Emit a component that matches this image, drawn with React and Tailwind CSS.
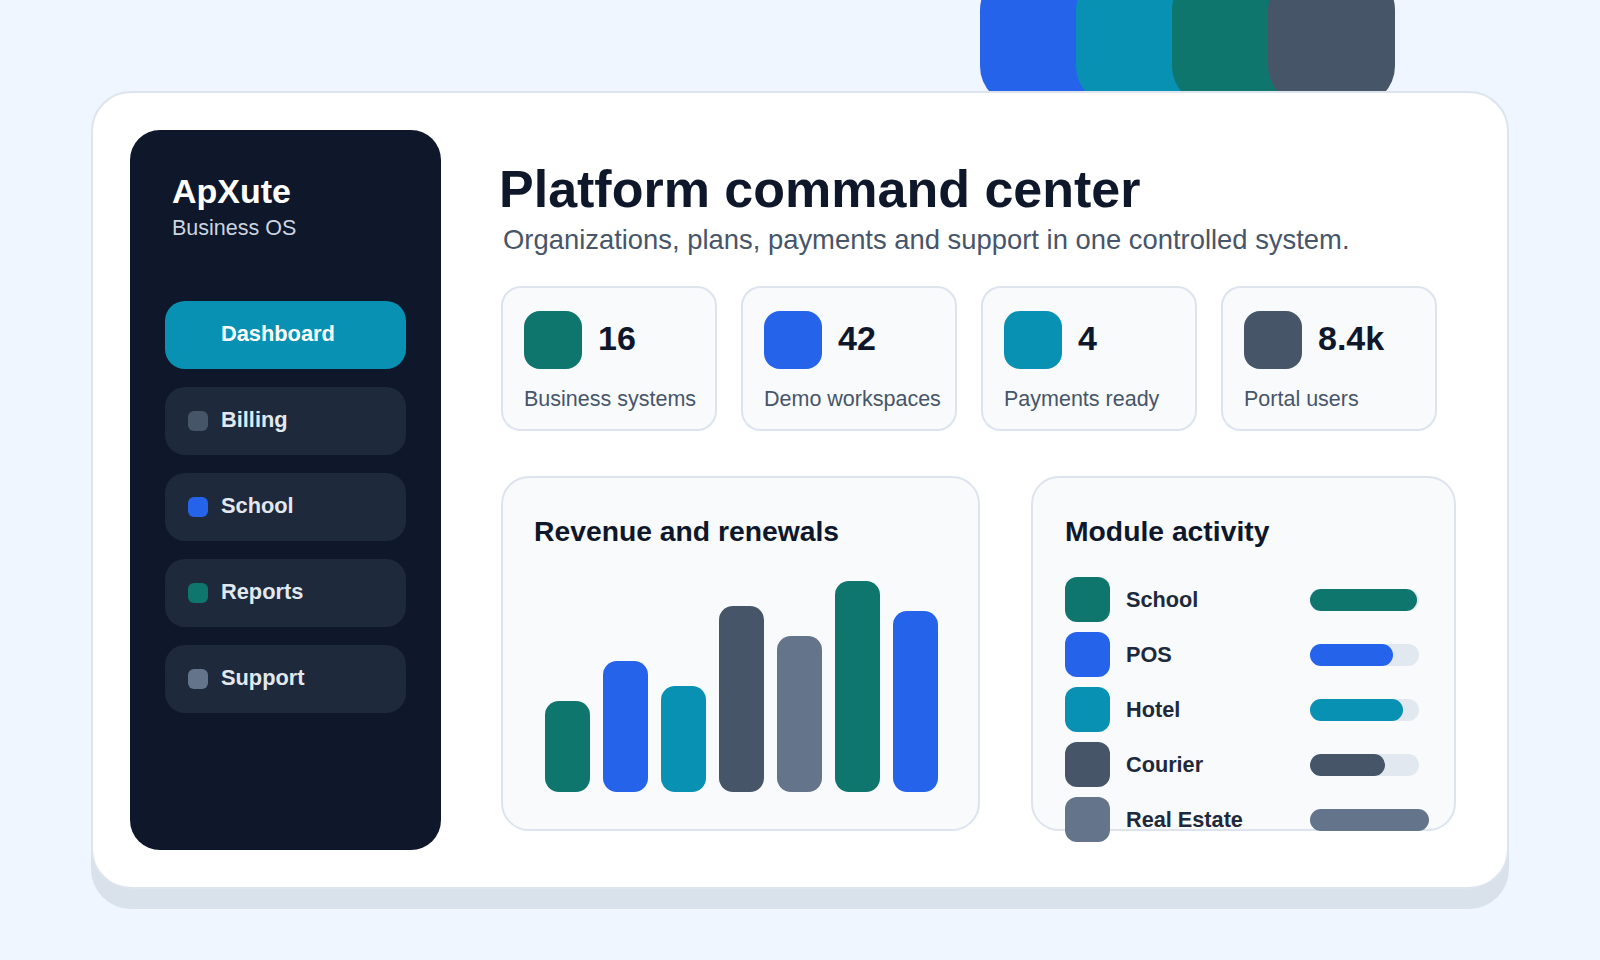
const navItems = [
  { label: 'Dashboard', dot: 'bg-transparent', active: true },
  { label: 'Billing', dot: 'bg-[#475569]' },
  { label: 'School', dot: 'bg-[#2563eb]' },
  { label: 'Reports', dot: 'bg-[#0f766e]' },
  { label: 'Support', dot: 'bg-[#64748b]' },
];

const stats = [
  { value: '16', label: 'Business systems', color: 'bg-[#0f766e]' },
  { value: '42', label: 'Demo workspaces', color: 'bg-[#2563eb]' },
  { value: '4', label: 'Payments ready', color: 'bg-[#0891b2]' },
  { value: '8.4k', label: 'Portal users', color: 'bg-[#475569]' },
];

const bars = [
  { h: 'h-[91px]', color: 'bg-[#0f766e]' },
  { h: 'h-[131px]', color: 'bg-[#2563eb]' },
  { h: 'h-[106px]', color: 'bg-[#0891b2]' },
  { h: 'h-[186px]', color: 'bg-[#475569]' },
  { h: 'h-[156px]', color: 'bg-[#64748b]' },
  { h: 'h-[211px]', color: 'bg-[#0f766e]' },
  { h: 'h-[181px]', color: 'bg-[#2563eb]' },
];

const modules = [
  { name: 'School', color: 'bg-[#0f766e]', fill: 107 },
  { name: 'POS', color: 'bg-[#2563eb]', fill: 83 },
  { name: 'Hotel', color: 'bg-[#0891b2]', fill: 93 },
  { name: 'Courier', color: 'bg-[#475569]', fill: 75 },
  { name: 'Real Estate', color: 'bg-[#64748b]', fill: 119 },
];

const tabs = ['bg-[#2563eb]', 'bg-[#0891b2]', 'bg-[#0f766e]', 'bg-[#475569]'];

const Sidebar = () => (
  <aside className="flex w-[311px] shrink-0 flex-col rounded-[30px] bg-[#0f172a] px-[35px] pt-[44px]">
    <div className="pl-[7px]">
      <div className="text-[34px] font-bold leading-none text-white">ApXute</div>
      <div className="mt-[8px] text-[21.5px] leading-[1.15] text-[#cbd5e1]">Business OS</div>
    </div>
    <nav className="mt-[60px] flex flex-col gap-[18px]">
      {navItems.map((item) => (
        <div
          key={item.label}
          className={`flex h-[68px] items-center gap-[13px] rounded-[20px] pl-[23px] text-[21.8px] font-bold ${
            item.active ? 'bg-[#0891b2] text-white' : 'bg-[#1e293b] text-[#e2e8f0]'
          }`}
        >
          <span className={`size-5 rounded-[6px] ${item.dot}`} />
          {item.label}
        </div>
      ))}
    </nav>
  </aside>
);

const StatCard = ({ stat }) => (
  <div className="h-[145px] w-[216px] rounded-[20px] border-2 border-[#dde4ee] bg-[#f8fafc] px-[21px] pt-[23px]">
    <div className="flex items-center gap-4">
      <span className={`size-[58px] rounded-[16px] ${stat.color}`} />
      <span className="-mt-[4px] text-[34px] font-bold leading-none text-[#0f172a]">{stat.value}</span>
    </div>
    <div className="mt-[18px] whitespace-nowrap text-[21.5px] leading-[1.15] text-[#475569]">{stat.label}</div>
  </div>
);

const RevenuePanel = () => (
  <div className="flex h-[355px] w-[479px] flex-col rounded-[28px] border-2 border-[#dde4ee] bg-[#f8fafc] px-[31px] py-[37px]">
    <h2 className="text-[28.3px] font-bold leading-[1.15] text-[#0f172a]">Revenue and renewals</h2>
    <div className="flex flex-1 items-end gap-[13px] pl-[11px]">
      {bars.map((bar, i) => (
        <div key={i} className={`w-[45px] rounded-[14px] ${bar.h} ${bar.color}`} />
      ))}
    </div>
  </div>
);

const ModulePanel = () => (
  <div className="flex h-[355px] w-[425px] flex-col rounded-[28px] border-2 border-[#dde4ee] bg-[#f8fafc] pl-[32px] pr-[35px] pt-[37px]">
    <h2 className="text-[28.3px] font-bold leading-[1.15] text-[#0f172a]">Module activity</h2>
    <div className="mt-[30px] flex shrink-0 flex-col gap-[10px]">
      {modules.map((m) => (
        <div key={m.name} className="flex h-[45px] shrink-0 items-center">
          <span className={`size-[45px] shrink-0 rounded-[12px] ${m.color}`} />
          <span className="ml-[16px] flex-1 whitespace-nowrap text-[21.7px] font-bold text-[#1e293b]">{m.name}</span>
          <div className="h-[22px] w-[109px] rounded-full bg-[#e2e8f0]">
            <div className={`h-full rounded-full ${m.color}`} style={{ width: m.fill }} />
          </div>
        </div>
      ))}
    </div>
  </div>
);

export default function App() {
  return (
    <div className="min-h-screen bg-[#eff6ff] font-['Liberation_Sans',Arial,sans-serif]">
      <div className="relative mx-auto w-[1418px] pt-[91px]">
        {/* colour tabs peeking out behind the card */}
        <div className="absolute left-[889px] top-[-30px] flex">
          {tabs.map((c, i) => (
            <div key={c} className={`h-[136px] w-[127px] rounded-[40px] ${c} ${i > 0 ? '-ml-[31px]' : ''}`} />
          ))}
        </div>

        <div className="relative z-10 flex h-[798px] gap-[60px] rounded-[40px] border-2 border-[#dde4ee] bg-white p-[37px] shadow-[0_20px_0_#d9e1eb]">
          <Sidebar />

          <main className="flex flex-1 flex-col pt-[33px]">
            <h1 className="-ml-[2px] text-[52px] font-bold leading-none text-[#0f172a]">Platform command center</h1>
            <p className="ml-[2px] mt-[9px] whitespace-nowrap text-[27.4px] leading-[1.2] text-[#475569]">
              Organizations, plans, payments and support in one controlled system.
            </p>

            <div className="mt-[29px] flex gap-6">
              {stats.map((s) => (
                <StatCard key={s.label} stat={s} />
              ))}
            </div>

            <div className="mt-[45px] flex gap-[51px]">
              <RevenuePanel />
              <ModulePanel />
            </div>
          </main>
        </div>
      </div>
    </div>
  );
}
